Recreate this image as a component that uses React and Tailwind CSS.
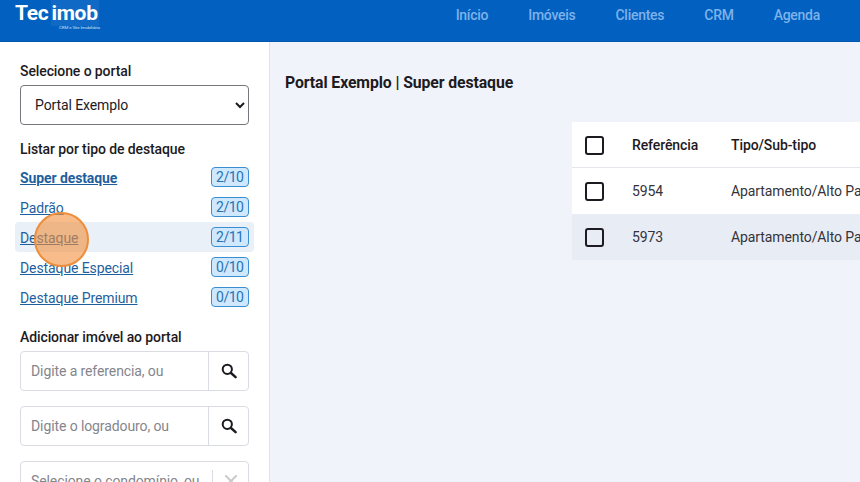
import React from "react";
import { X } from "lucide-react";

const items = [
  ["Super destaque", "2/10", true],
  ["Padrão", "2/10"],
  ["Destaque", "2/11", false, true],
  ["Destaque Especial", "0/10"],
  ["Destaque Premium", "0/10"],
];

function Box() {
  return <span className="block w-[19px] h-[19px] rounded-[3px] border-2 border-[#1d1a22] bg-transparent" />;
}

function SearchField({ placeholder }) {
  return (
    <div className="flex h-10 rounded-[4px] border border-[#d9dde3] bg-white">
      <div className="flex-1 flex items-center pl-[10px] text-[14px] text-[#85858c]">{placeholder}</div>
      <div className="w-10 flex items-center justify-center border-l border-[#d9dde3]">
        <svg width="16" height="16" viewBox="0 0 16 16" fill="none" stroke="#1d1a22" strokeWidth="2" strokeLinecap="round">
          <circle cx="6.3" cy="6.3" r="4.6" />
          <path d="M10 10l4.6 4.2" strokeWidth="2.4" />
        </svg>
      </div>
    </div>
  );
}

export default function App() {
  return (
    <div className="w-[860px] h-[482px] overflow-hidden flex flex-col bg-[#f0f3f9] font-['Roboto',sans-serif] tracking-[-0.1px] relative">
      <header className="h-[42px] shrink-0 bg-[#0160c0] border-b border-[#0156ad] flex items-start justify-between pl-[15px] pr-[40px]">
        <div className="relative h-[41px] w-[85px]">
          <div className="flex items-baseline text-white font-bold text-[21px] leading-[26px] tracking-[-0.3px]">
            <span>Tec</span>
            <span className="ml-[3px] bg-[#0f69c5] pr-[1px]">imob</span>
          </div>
          <div className="text-right text-[4.4px] leading-[4px] text-[#cfe2f7]">CRM e Site Imobiliário</div>
        </div>
        <nav className="flex gap-[40px] pt-[6px] text-[14px] font-medium leading-[18px] tracking-[-0.27px] text-[#7db2ea]">
          <span>Início</span>
          <span>Imóveis</span>
          <span>Clientes</span>
          <span>CRM</span>
          <span>Agenda</span>
        </nav>
      </header>
      <div className="flex flex-1 min-h-0">
        <aside className="w-[270px] shrink-0 bg-white border-r border-[#dfe3ea] px-[20px] pt-[20px] text-[#1d1a22]">
          <div className="text-[14px] leading-[18px] font-medium">Selecione o portal</div>
          <select className="mt-[5px] w-full h-10 pl-[10px] pr-[8px] bg-white rounded-[4px] border border-[#77767c] text-[14px] text-[#1d1a22]">
            <option>Portal Exemplo</option>
          </select>
          <div className="mt-[15px] text-[14px] leading-[18px] font-medium">Listar por tipo de destaque</div>
          <ul className="mt-[4px] -mx-[5px] flex flex-col">
            {items.map(([t, c, bold, hover]) => (
              <li key={t} className={`h-[30px] flex items-center justify-between px-[5px] rounded-[4px] ${hover ? "bg-[#e9f0f8]" : ""}`}>
                <span className={`pt-[2px] text-[14px] underline text-[#1f5f9e] ${bold ? "font-bold" : ""}`}>{t}</span>
                <span className="h-[20px] px-[4.5px] flex items-center rounded-[4px] border border-[#3a8ecf] bg-[#cfe8fd] text-[14px] tracking-[-0.5px] text-[#2773b4]">{c}</span>
              </li>
            ))}
          </ul>
          <div className="mt-[16px] text-[14px] leading-[18px] font-medium">Adicionar imóvel ao portal</div>
          <div className="mt-[5px] flex flex-col gap-[15px]">
            <SearchField placeholder="Digite a referencia, ou" />
            <SearchField placeholder="Digite o logradouro, ou" />
            <div className="flex h-10 rounded-[4px] border border-[#d9dde3] bg-white">
              <div className="flex-1 flex items-center pl-[10px] text-[14px] text-[#85858c]">Selecione o condomínio, ou</div>
              <div className="w-[36px] my-[8px] flex items-center justify-center border-l border-[#d9dde3]">
                <X size={20} strokeWidth={2.4} className="text-[#c8cacd]" />
              </div>
            </div>
          </div>
        </aside>
        <main className="flex-1 min-w-0 pl-[15px] pt-[31px]">
          <h1 className="text-[15.8px] leading-[20px] font-bold text-[#1d1a22]">Portal Exemplo | Super destaque</h1>
          <div className="mt-[29px] ml-[287px] w-[288px] overflow-hidden text-[14px] text-[#1d1a22] whitespace-nowrap">
            <div className="h-[46px] pt-[1px] bg-white border-b border-[#e3e6eb] flex items-center font-medium">
              <div className="w-[60px] shrink-0 pl-[13px]"><Box /></div>
              <div className="w-[99px] shrink-0">Referência</div>
              <div>Tipo/Sub-tipo</div>
            </div>
            <div className="h-[46px] bg-white flex items-center text-[#35333a]">
              <div className="w-[60px] shrink-0 pl-[13px]"><Box /></div>
              <div className="w-[99px] shrink-0">5954</div>
              <div>Apartamento/Alto Padrão</div>
            </div>
            <div className="h-[46px] bg-[#e8ecf4] flex items-center text-[#35333a]">
              <div className="w-[60px] shrink-0 pl-[13px]"><Box /></div>
              <div className="w-[99px] shrink-0">5973</div>
              <div>Apartamento/Alto Padrão</div>
            </div>
          </div>
        </main>
      </div>
      <div className="absolute left-[34px] top-[212px] w-[55px] h-[55px] rounded-full bg-[#f28f3c]/60 border-2 border-[#ee8e3a]" />
    </div>
  );
}
